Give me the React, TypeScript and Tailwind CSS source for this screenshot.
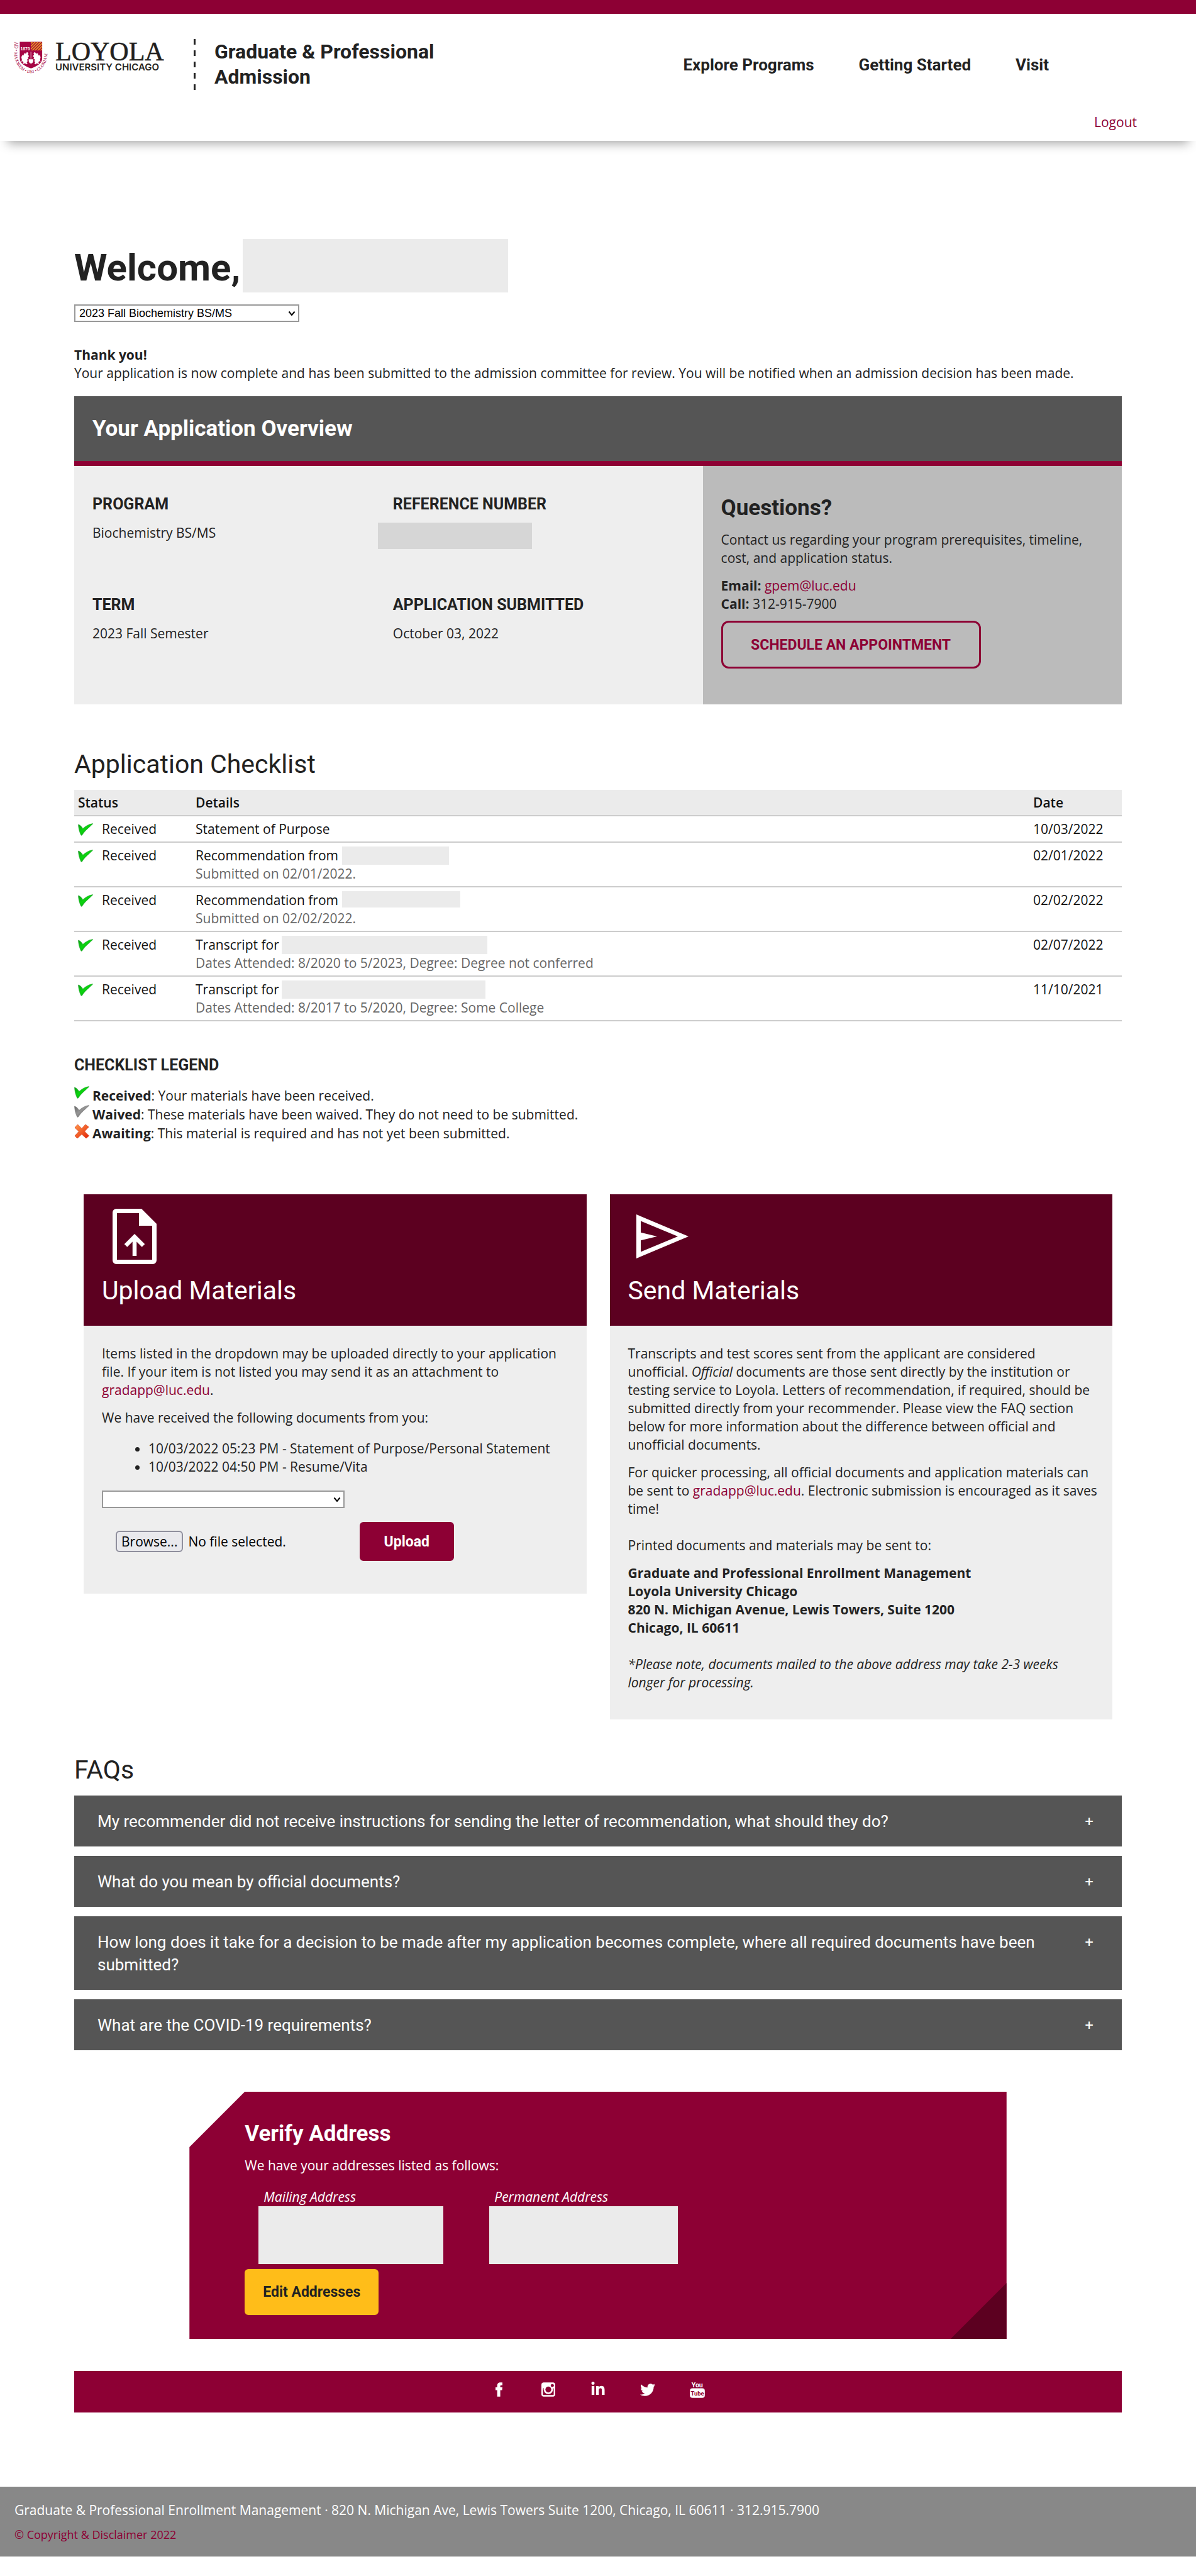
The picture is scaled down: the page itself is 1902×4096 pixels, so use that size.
import React from "react";
import { FaLinkedinIn, FaTwitter } from "react-icons/fa";

const display = "font-['Roboto',sans-serif]";
const capsHeading = `${display} text-[25px] leading-[30px] font-bold uppercase`;
const sectionHeading = `${display} text-[41px] leading-[50px] font-normal`;
const panelHeading = `${display} text-[35px] font-bold`;
const link = "text-[#8d0034] hover:underline";

function Crest() {
  return (
    <svg viewBox="0 0 218 206" className="h-[51px] w-[54px] shrink-0 overflow-visible" aria-hidden="true">
      <defs>
        <path id="motto" d="M3 2 V80 C3 140 45 203 109 203 C173 203 215 140 215 80 V-8" />
        <clipPath id="quarter">
          <rect x="109" y="3" width="73" height="55" />
        </clipPath>
      </defs>
      <path d="M38 2 H182 V108 C182 142 148 158 110 173 C72 158 38 142 38 108 Z" fill="#a60544" />
      <g clipPath="url(#quarter)" stroke="#e9a01f" strokeWidth="7">
        {[0, 1, 2, 3, 4, 5, 6, 7].map((i) => (
          <line key={i} x1={60 + i * 18} y1="62" x2={122 + i * 18} y2="0" />
        ))}
      </g>
      <text x="42" y="56" fontSize="28" fontWeight="700" fill="#fff" fontFamily="Liberation Sans, sans-serif">
        1870
      </text>
      <g fill="#fff">
        <path d="M48 100 l8-14 6 4 4-14 12 2 6-10 10 6-4 10 8 10-8 8 4 8-8 4 2 12-6 12 8 6-12 2-6-8-4 4-12 2 6-10-4-8-10 4 4-12z" />
        <path d="M172 100 l-8-14-6 4-4-14-12 2-6-10-10 6 4 10-8 10 8 8-4 8 8 4-2 12 6 12-8 6 12 2 6-8 4 4 12 2-6-10 4-8 10 4-4-12z" />
        <path d="M96 114 h28 c2 10 0 26-14 27 c-14-1-16-17-14-27z" />
        <rect x="108" y="66" width="3" height="46" />
      </g>
      <text fontSize="29" fill="#a60544" fontFamily="Liberation Serif, serif">
        <textPath href="#motto">AD • MAJOREM • DEI • GLORIAM</textPath>
      </text>
    </svg>
  );
}

function Check({ muted = false }: { muted?: boolean }) {
  const id = muted ? "check-muted" : "check-green";
  return (
    <svg viewBox="0 0 24 20" className="h-5 w-6 shrink-0" aria-hidden="true">
      <defs>
        <linearGradient id={id} x1="0" y1="0" x2="1" y2="1">
          <stop offset="0" stopColor={muted ? "#666" : "#0c9a14"} />
          <stop offset="0.45" stopColor={muted ? "#959595" : "#0bd50f"} />
          <stop offset="1" stopColor={muted ? "#555" : "#087a10"} />
        </linearGradient>
      </defs>
      <path
        d="M0.5 2 C3 2.600 5.500 4.500 7.800 8.500 C12 4.500 17 1.500 23.500 0.500 C23.500 2.500 12 10 6.500 19 L5 19.300 C3 15.500 1 10 0.500 2Z"
        fill={`url(#${id})`}
        stroke={muted ? "#777" : "#2aa035"}
        strokeWidth="0.6"
      />
    </svg>
  );
}

function Cross() {
  return (
    <svg viewBox="0 0 24 24" className="h-6 w-6 shrink-0" aria-hidden="true">
      <defs>
        <linearGradient id="cross" x1="0" y1="0" x2="1" y2="1">
          <stop offset="0" stopColor="#ff9a4a" />
          <stop offset="1" stopColor="#e22208" />
        </linearGradient>
      </defs>
      <path
        d="M5.500 1 L12 7.500 L18 1 L23 5 L16.500 12 L23.500 19 L19 23 L12 16.500 L5 23 L1 19 L7.500 12 L1 6Z"
        fill="url(#cross)"
        stroke="#e0431c"
        strokeWidth="0.8"
        strokeLinejoin="round"
      />
    </svg>
  );
}

function Dropdown({ label, width, children }: { label: string; width: string; children?: React.ReactNode }) {
  return (
    <div className={`relative ${width} max-w-full`}>
      <select
        aria-label={label}
        className="block h-7 w-full appearance-none border-2 border-[#999] bg-white pr-8 pl-1.5 font-['Liberation_Sans',Arial,sans-serif] text-[18px] leading-6 text-black"
      >
        {children}
      </select>
      <svg
        viewBox="0 0 12 10"
        className="pointer-events-none absolute top-[10px] right-1.5 h-[10px] w-3"
        fill="none"
        stroke="#000"
        strokeWidth="2"
        aria-hidden="true"
      >
        <path d="M1.500 1.500 L6 7 L10.500 1.500" />
      </svg>
    </div>
  );
}

function Redacted({ size }: { size: string }) {
  return <span aria-hidden="true" className={`inline-block bg-[#ebebeb] align-top ${size}`} />;
}

type Item = { title: string; box?: string; note?: string; date: string };

const checklist: Item[] = [
  { title: "Statement of Purpose", date: "10/03/2022" },
  { title: "Recommendation from", box: "h-[29px] w-[170px] ml-1.5", note: "Submitted on 02/01/2022.", date: "02/01/2022" },
  { title: "Recommendation from", box: "h-[26px] w-[188px] ml-1.5", note: "Submitted on 02/02/2022.", date: "02/02/2022" },
  {
    title: "Transcript for",
    box: "h-[29px] w-[327px] ml-1",
    note: "Dates Attended: 8/2020 to 5/2023, Degree: Degree not conferred",
    date: "02/07/2022",
  },
  {
    title: "Transcript for",
    box: "h-[29px] w-[324px] ml-1",
    note: "Dates Attended: 8/2017 to 5/2020, Degree: Some College",
    date: "11/10/2021",
  },
];

const faqs = [
  "My recommender did not receive instructions for sending the letter of recommendation, what should they do?",
  "What do you mean by official documents?",
  "How long does it take for a decision to be made after my application becomes complete, where all required documents have been submitted?",
  "What are the COVID-19 requirements?",
];

function Header() {
  return (
    <header className="relative border-t-[22px] border-[#8d0034] bg-white pt-10 pb-[15px] shadow-[0_16px_16px_-12px_rgba(0,0,0,0.35)]">
      <div className="flex items-start pl-[22px]">
        <a href="#" aria-label="Loyola University Chicago" className="flex gap-3 pt-1">
          <Crest />
          <svg viewBox="0 0 176 51" className="h-[51px] w-[176px] overflow-visible" fill="#231f20" aria-hidden="true">
            <text x="0" y="30" fontSize="42" stroke="#231f20" strokeWidth="0.600" fontFamily="Liberation Serif, serif">
              LOYOLA
            </text>
            <text x="0" y="46" fontSize="15" fontWeight="600" fontFamily="Inter, sans-serif">
              UNIVERSITY CHICAGO
            </text>
          </svg>
        </a>
        <div className="ml-11 h-[81px] w-[3px] bg-[repeating-linear-gradient(#222_0_9px,transparent_9px_18px)]" />
        <p className={`${display} ml-[30px] w-[360px] text-[32px] leading-10 font-bold`}>
          Graduate &amp; Professional Admission
        </p>
        <nav className={`${display} mt-[21px] mr-[234px] ml-auto flex gap-[71px] text-[26px] leading-10 font-bold`}>
          <a href="#">Explore Programs</a>
          <a href="#">Getting Started</a>
          <a href="#">Visit</a>
        </nav>
      </div>
      <div className="mt-[37px] pr-[94px] text-right">
        <a href="#" className={link}>
          Logout
        </a>
      </div>
    </header>
  );
}

function Overview() {
  return (
    <section className="mt-[22px]">
      <h2 className={`${panelHeading} border-b-8 border-[#8d0034] bg-[#555] px-[29px] py-[30px] leading-[43px] text-white`}>
        Your Application Overview
      </h2>
      <div className="grid grid-cols-[3fr_2fr]">
        <div className="grid grid-cols-2 content-start gap-y-[74px] bg-[#eee] pt-[46px] pr-[15px] pl-[29px]">
          <div>
            <h3 className={capsHeading}>Program</h3>
            <p className="mt-4">Biochemistry BS/MS</p>
          </div>
          <div>
            <h3 className={capsHeading}>Reference Number</h3>
            <div className="mt-3.5 -ml-6 h-[42px] w-[245px] bg-[#d6d6d6]" />
          </div>
          <div>
            <h3 className={capsHeading}>Term</h3>
            <p className="mt-4">2023 Fall Semester</p>
          </div>
          <div>
            <h3 className={capsHeading}>Application Submitted</h3>
            <p className="mt-4">October 03, 2022</p>
          </div>
        </div>
        <div className="bg-[#bbb] px-[29px] pt-[45px] pb-[57px]">
          <h3 className={`${panelHeading} leading-[44px]`}>Questions?</h3>
          <p className="mt-3.5">Contact us regarding your program prerequisites, timeline, cost, and application status.</p>
          <p className="mt-[15px]">
            <strong>Email:</strong>{" "}
            <a href="#" className={link}>
              gpem@luc.edu
            </a>
            <br />
            <strong>Call:</strong> 312-915-7900
          </p>
          <button
            type="button"
            className={`${display} mt-3 h-[76px] w-[413px] max-w-full rounded-xl border-[3px] border-[#8d0034] text-[23px] font-bold text-[#8d0034] uppercase`}
          >
            Schedule an Appointment
          </button>
        </div>
      </div>
    </section>
  );
}

function Checklist() {
  const cell = "border-b-2 border-[#ccc] px-1.5 pt-1.5 pb-[5px] align-top";
  return (
    <section className="mt-[70px]">
      <h2 className={sectionHeading}>Application Checklist</h2>
      <table className="mt-4 w-full border-separate border-spacing-0 text-left text-[#111]">
        <thead className="bg-[#ebebeb]">
          <tr>
            <th scope="col" className={`${cell} w-[187px] font-semibold`}>
              Status
            </th>
            <th scope="col" className={`${cell} font-semibold`}>
              Details
            </th>
            <th scope="col" className={`${cell} w-[147px] font-semibold`}>
              Date
            </th>
          </tr>
        </thead>
        <tbody>
          {checklist.map((item, i) => (
            <tr key={i}>
              <td className={cell}>
                <span className="flex items-center gap-3.5">
                  <Check />
                  Received
                </span>
              </td>
              <td className={cell}>
                {item.title}
                {item.box && <Redacted size={item.box} />}
                {item.note && <div className="text-[#666]">{item.note}</div>}
              </td>
              <td className={cell}>{item.date}</td>
            </tr>
          ))}
        </tbody>
      </table>

      <h3 className={`${capsHeading} mt-[55px]`}>Checklist Legend</h3>
      <ul className="mt-[18px] leading-[30px]">
        <li className="flex items-start gap-[5px]">
          <Check />
          <span>
            <strong>Received</strong>: Your materials have been received.
          </span>
        </li>
        <li className="flex items-start gap-[5px]">
          <Check muted />
          <span>
            <strong>Waived</strong>: These materials have been waived. They do not need to be submitted.
          </span>
        </li>
        <li className="flex items-start gap-[5px]">
          <Cross />
          <span>
            <strong>Awaiting</strong>: This material is required and has not yet been submitted.
          </span>
        </li>
      </ul>
    </section>
  );
}

function MaterialCard({ icon, title, children }: { icon: React.ReactNode; title: string; children: React.ReactNode }) {
  return (
    <section className="min-w-0 flex-1 bg-[#eee]">
      <div className="bg-[#5c0020] px-[29px] pt-[23px] pb-[31px] text-white">
        <div className="flex h-[88px] items-center">{icon}</div>
        <h2 className={`${sectionHeading} mt-[17px]`}>{title}</h2>
      </div>
      <div className="pt-[30px] pr-[22px] pl-[29px]">{children}</div>
    </section>
  );
}

function Materials() {
  return (
    <div className="mt-[82px] flex items-start gap-[37px] px-[15px]">
      <MaterialCard
        title="Upload Materials"
        icon={
          <svg viewBox="0 0 70 88" className="ml-[17px] h-[88px] w-[70px]" fill="none" aria-hidden="true">
            <path
              fill="#fff"
              fillRule="evenodd"
              d="M6 0 H46 L70 24 V82 a6 6 0 0 1-6 6 H6 a6 6 0 0 1-6-6 V6 a6 6 0 0 1 6-6 Z M7 7 V81 H63 V27 H42 V7 Z"
            />
            <path d="M35 75 V46 M21 58.500 L35 44.500 L49 58.500" stroke="#fff" strokeWidth="6.500" />
          </svg>
        }
      >
        <div className="pb-[52px]">
          <p>
            Items listed in the dropdown may be uploaded directly to your application file. If your item is not listed you
            may send it as an attachment to{" "}
            <a href="#" className={link}>
              gradapp@luc.edu
            </a>
            .
          </p>
          <p className="mt-[15px]">We have received the following documents from you:</p>
          <ul className="mt-5 list-disc pl-[74px]">
            <li>10/03/2022 05:23 PM - Statement of Purpose/Personal Statement</li>
            <li>10/03/2022 04:50 PM - Resume/Vita</li>
          </ul>
          <div className="mt-[23px]">
            <Dropdown label="Document type" width="w-[386px]" />
          </div>
          <div className="mt-[22px] flex items-center pl-[22px] text-black">
            <label className="flex cursor-pointer items-center gap-2">
              <input type="file" className="sr-only" />
              <span className="rounded-md border-2 border-[#8f8f9d] bg-[#e9e9ed] px-[7px] leading-[30px]">Browse...</span>
              <span>No file selected.</span>
            </label>
            <button
              type="button"
              className={`${display} ml-[117px] h-[62px] w-[150px] rounded-md bg-[#8d0034] text-[23px] font-bold text-white`}
            >
              Upload
            </button>
          </div>
        </div>
      </MaterialCard>
      <MaterialCard
        title="Send Materials"
        icon={
          <svg viewBox="0 0 83 70" className="ml-[13px] h-[70px] w-[83px]" fill="#fff" aria-hidden="true">
            <path fillRule="evenodd" d="M0 0 L83 35 L0 70 Z M7 10.500 V59.500 L66 35 Z" />
            <path d="M4 28 L33 35 L4 42 Z" />
          </svg>
        }
      >
        <div className="pb-11">
          <p>
            Transcripts and test scores sent from the applicant are considered unofficial. <em>Official</em> documents are
            those sent directly by the institution or testing service to Loyola. Letters of recommendation, if required,
            should be submitted directly from your recommender. Please view the FAQ section below for more information about
            the difference between official and unofficial documents.
          </p>
          <p className="mt-[15px]">
            For quicker processing, all official documents and application materials can be sent to{" "}
            <a href="#" className={link}>
              gradapp@luc.edu
            </a>
            . Electronic submission is encouraged as it saves time!
            <br />
            <br />
            Printed documents and materials may be sent to:
          </p>
          <address className="mt-[15px] font-bold not-italic">
            Graduate and Professional Enrollment Management
            <br />
            Loyola University Chicago
            <br />
            820 N. Michigan Avenue, Lewis Towers, Suite 1200
            <br />
            Chicago, IL 60611
          </address>
          <p className="mt-[29px] italic">
            *Please note, documents mailed to the above address may take 2-3 weeks longer for processing.
          </p>
        </div>
      </MaterialCard>
    </div>
  );
}

function Faqs() {
  return (
    <section className="mt-[55px]">
      <h2 className={sectionHeading}>FAQs</h2>
      <div className="mt-4 flex flex-col gap-[15px]">
        {faqs.map((question) => (
          <button
            key={question}
            type="button"
            aria-expanded="false"
            className={`${display} flex w-full items-start justify-between bg-[#555] pt-[23px] pr-[45px] pb-[22px] pl-[37px] text-left text-[26px] leading-9 text-white`}
          >
            <span className="mr-[70px]">{question}</span>
            <span aria-hidden="true" className="font-['Open_Sans',sans-serif] text-[24px] font-semibold">
              +
            </span>
          </button>
        ))}
      </div>
    </section>
  );
}

function VerifyAddress() {
  return (
    <section className="relative mx-auto mt-[66px] w-[78%] bg-[#8d0034] px-[88px] pt-[45px] pb-[38px] text-white [clip-path:polygon(88px_0,100%_0,100%_100%,0_100%,0_88px)]">
      <h2 className={`${panelHeading} leading-[44px]`}>Verify Address</h2>
      <p className="mt-3.5">We have your addresses listed as follows:</p>
      <div className="mt-[21px] flex gap-[73px] pl-[22px]">
        <div>
          <p className="pl-2 italic">Mailing Address</p>
          <div className="h-[92px] w-[294px] bg-[#ebebeb]" />
        </div>
        <div>
          <p className="pl-2 italic">Permanent Address</p>
          <div className="h-[92px] w-[300px] bg-[#ebebeb]" />
        </div>
      </div>
      <button
        type="button"
        className={`${display} mt-2 h-[73px] w-[213px] rounded-md bg-[#ffbd19] text-[23px] font-bold text-[#222]`}
      >
        Edit Addresses
      </button>
      <div className="absolute right-0 bottom-0 size-[89px] bg-[#5c0020] [clip-path:polygon(100%_0,100%_100%,0_100%)]" />
    </section>
  );
}

function SocialBar() {
  const item = "flex w-6 justify-center";
  return (
    <div className="mt-[51px] flex h-[66px] items-start justify-center gap-[55px] bg-[#8d0034] pt-4 text-white">
      <a href="#" aria-label="Facebook" className={item}>
        <svg viewBox="0 0 45 92" className="mt-0.5 h-[23px] w-[11px]" fill="#fff" aria-hidden="true">
          <path d="M11 92 V50 H0 V32 H11 V22 C11 7 19 0 32 0 H45 V18 H37 C32 18 31 20 31 25 V32 H45 L43 50 H31 V92 Z" />
        </svg>
      </a>
      <a href="#" aria-label="Instagram" className={item}>
        <svg viewBox="0 0 90 92" className="mt-0.5 h-[23px] w-[22px]" fill="#fff" aria-hidden="true">
          <rect width="90" height="92" rx="15" />
          <rect x="10" y="38" width="70" height="44" rx="4" fill="#8d0034" />
          <circle cx="45" cy="46" r="30" />
          <circle cx="45" cy="46" r="19" fill="#8d0034" />
          <circle cx="71" cy="20" r="10" fill="#8d0034" />
        </svg>
      </a>
      <a href="#" aria-label="LinkedIn" className={item}>
        <FaLinkedinIn className="mt-px h-6 w-6" />
      </a>
      <a href="#" aria-label="Twitter" className={item}>
        <FaTwitter className="mt-0.5 h-6 w-6" />
      </a>
      <a href="#" aria-label="YouTube" className={item}>
        <svg viewBox="0 0 94 107" className="h-[27px] w-6 overflow-visible" fontFamily="Roboto, sans-serif" aria-hidden="true">
          <text x="46" y="38" textAnchor="middle" fontSize="42" fontWeight="700" fill="#fff">
            You
          </text>
          <rect y="46" width="94" height="60" rx="16" fill="#fff" />
          <text x="47" y="90" textAnchor="middle" fontSize="37" fontWeight="700" fill="#8d0034">
            Tube
          </text>
        </svg>
      </a>
    </div>
  );
}

export default function App() {
  return (
    <div className="bg-white font-['Open_Sans',sans-serif] text-[21px] leading-[29px] text-[#222]">
      <Header />
      <main className="px-[118px] pt-[156px]">
        <div className="flex items-start gap-1">
          <h1 className={`${display} text-[60px] leading-[92px] font-bold`}>Welcome,</h1>
          <div className="h-[85px] w-[422px] bg-[#ebebeb]" />
        </div>
        <div className="mt-3">
          <Dropdown label="Application" width="w-[358px]">
            <option>2023 Fall Biochemistry BS/MS</option>
          </Dropdown>
        </div>
        <p className="mt-[38px]">
          <strong>Thank you!</strong>
          <br />
          Your application is now complete and has been submitted to the admission committee for review. You will be notified
          when an admission decision has been made.
        </p>
        <Overview />
        <Checklist />
        <Materials />
        <Faqs />
        <VerifyAddress />
        <SocialBar />
      </main>
      <footer className="mt-[118px] mb-7 bg-[#888] px-[23px] pt-[23px] pb-[23px] text-white">
        <p>
          Graduate &amp; Professional Enrollment Management · 820 N. Michigan Ave, Lewis Towers Suite 1200, Chicago, IL 60611 ·
          312.915.7900
        </p>
        <p className="mt-3 text-[18px] leading-6">
          <a href="#" className={link}>
            © Copyright &amp; Disclaimer 2022
          </a>
        </p>
      </footer>
    </div>
  );
}
